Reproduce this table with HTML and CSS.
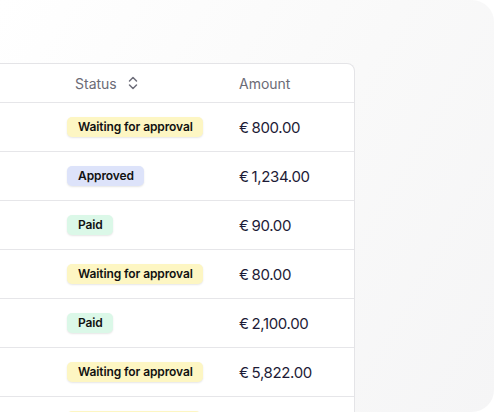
FILE: index.html
```html
<!DOCTYPE html>
<html lang="en">
<head>
<meta charset="utf-8">
<link rel="stylesheet" href="styles.css">
</head>
<body>
<div class="panel">
  <div class="card">
    <div class="row head">
      <div class="c-status"><span>Status</span>
        <svg class="sort" width="10" height="14" viewBox="0 0 10 14" fill="none" stroke="#6e6e7a" stroke-width="1.5" stroke-linecap="round" stroke-linejoin="round"><path d="M1.5 5 L5 1.5 L8.5 5"/><path d="M1.5 9 L5 12.5 L8.5 9"/></svg>
      </div>
      <div class="c-amount">Amount</div>
    </div>
    <div class="row"><div class="c-status"><span class="badge wait">Waiting for approval</span></div><div class="c-amount amt">€ 800.00</div></div>
    <div class="row"><div class="c-status"><span class="badge appr">Approved</span></div><div class="c-amount amt">€ 1,234.00</div></div>
    <div class="row"><div class="c-status"><span class="badge paid">Paid</span></div><div class="c-amount amt">€ 90.00</div></div>
    <div class="row"><div class="c-status"><span class="badge wait">Waiting for approval</span></div><div class="c-amount amt">€ 80.00</div></div>
    <div class="row"><div class="c-status"><span class="badge paid">Paid</span></div><div class="c-amount amt">€ 2,100.00</div></div>
    <div class="row"><div class="c-status"><span class="badge wait">Waiting for approval</span></div><div class="c-amount amt">€ 5,822.00</div></div>
    <div class="row"><div class="c-status"><span class="badge wait placeholder"></span></div><div class="c-amount amt"></div></div>
  </div>
</div>
</body>
</html>
```

FILE: styles.css
```css
* { box-sizing: border-box; }
html, body { margin: 0; padding: 0; background: #ffffff; }
body { font-family: Inter, "Noto Sans", sans-serif; }
.panel {
  width: 494px;
  height: 412px;
  overflow: hidden;
  border-radius: 0 22px 22px 0;
  background: linear-gradient(120deg, #ffffff 0%, #f9f9f9 55%, #f5f5f6 100%);
  padding-top: 63px;
}
.card {
  width: 355px;
  background: #ffffff;
  border: 1px solid #e4e4e7;
  border-left: none;
  border-radius: 0 8px 0 0;
}
.row {
  display: flex;
  align-items: center;
  height: 49px;
  border-top: 1px solid #e6e6e9;
}
.row.head {
  height: 38px;
  border-top: none;
}
.c-status {
  width: 239px;
  padding-left: 67px;
  display: flex;
  align-items: center;
}
.head .c-status { padding-left: 75px; gap: 11px; }
.head span, .head .c-amount {
  font-size: 14px;
  color: #6b6b76;
}
.sort { display: block; }
.amt {
  font-size: 15px;
  letter-spacing: -0.35px;
  word-spacing: -1px;
  color: #1d1b36;
}
.badge {
  display: inline-block;
  height: 20px;
  line-height: 20px;
  padding: 0 10px 0 11px;
  border-radius: 5px;
  font-size: 12px;
  font-weight: 600;
  letter-spacing: -0.1px;
  color: #111111;
  box-shadow: 0 1px 2px rgba(0, 0, 0, 0.1);
}
.placeholder { width: 134px; }
.wait { background: #fdf6c3; }
.appr { background: #dde3fa; }
.paid { background: #dbf8e8; }
```
